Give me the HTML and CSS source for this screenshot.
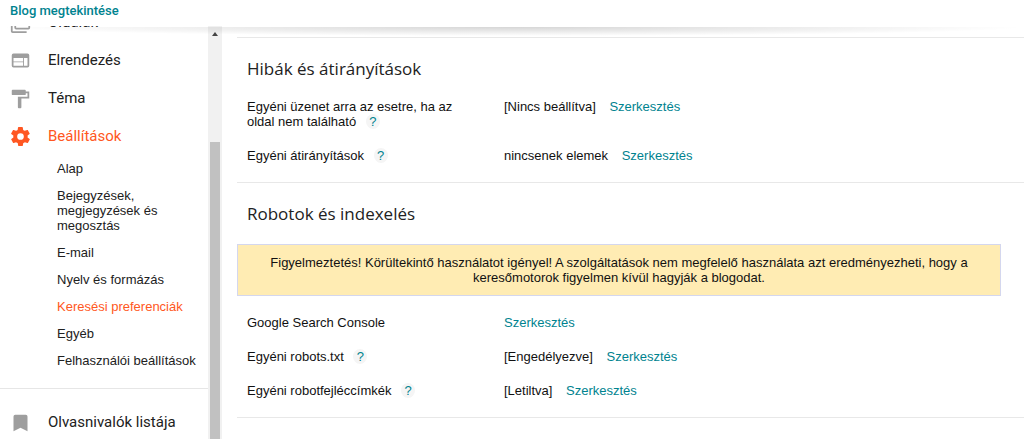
FILE: index.html
```html
<!DOCTYPE html>
<html lang="hu">
<head>
<meta charset="utf-8">
<title>Keresési preferenciák</title>
<link rel="stylesheet" href="styles.css">
</head>
<body>
<header class="topbar"><a class="view-blog" href="#">Blog megtekintése</a></header>
<div class="workspace">
  <div class="sidebar">
    <nav class="nav">
      <a class="nav-item" href="#"><svg class="icon" viewBox="0 0 24 24"><path d="M3 7H1v15a2 2 0 0 0 2 2h16v-2H3zM21 3H7a2 2 0 0 0-2 2v13a2 2 0 0 0 2 2h14a2 2 0 0 0 2-2V5a2 2 0 0 0-2-2zm0 15H7V5h14z"/></svg><span>Oldalak</span></a>
      <a class="nav-item" href="#"><svg class="icon" viewBox="0 0 24 24"><path d="M20 4H4a2 2 0 0 0-2 2v12a2 2 0 0 0 2 2h16a2 2 0 0 0 2-2V6a2 2 0 0 0-2-2zm-5 14H4v-4h11zm0-5H4V9h11zm5 5h-4V9h4z"/></svg><span>Elrendezés</span></a>
      <a class="nav-item" href="#"><svg class="icon" viewBox="0 0 24 24"><path d="M18 4V3a1 1 0 0 0-1-1H3a1 1 0 0 0-1 1v4a1 1 0 0 0 1 1h14a1 1 0 0 0 1-1V6h2v4H9v12a1 1 0 0 0 1 1h2a1 1 0 0 0 1-1V12h9V4z"/></svg><span>Téma</span></a>
      <a class="nav-item active" href="#"><svg class="icon" viewBox="1 1 22 22"><path d="M19.4 13c0-.3.1-.6.1-1s0-.7-.1-1l2.1-1.600c.2-.2.200-.4.100-.6l-2-3.500c-.1-.2-.4-.3-.6-.2l-2.500 1a7.300 7.300 0 0 0-1.700-1l-.4-2.600a.5.5 0 0 0-.5-.4h-4a.5.5 0 0 0-.5.400L9 5.100a7.700 7.700 0 0 0-1.700 1l-2.500-1c-.2-.1-.5 0-.6.200l-2 3.500c-.1.200-.1.500.1.600L4.500 11a8 8 0 0 0 0 2l-2.100 1.600c-.2.200-.2.400-.1.600l2 3.500c.1.200.4.300.6.200l2.500-1c.5.400 1.100.7 1.700 1l.4 2.600c0 .2.200.4.500.4h4c.2 0 .5-.2.500-.4l.4-2.600a7.300 7.300 0 0 0 1.700-1l2.500 1c.2.100.5 0 .6-.2l2-3.500c.1-.2.100-.5-.1-.6zM12 15.500a3.500 3.500 0 1 1 0-7 3.500 3.500 0 0 1 0 7z"/></svg><span>Beállítások</span></a>
      <ul class="subnav">
        <li><a href="#">Alap</a></li>
        <li><a href="#">Bejegyzések, megjegyzések és megosztás</a></li>
        <li><a href="#">E-mail</a></li>
        <li><a href="#">Nyelv és formázás</a></li>
        <li><a class="active" href="#">Keresési preferenciák</a></li>
        <li><a href="#">Egyéb</a></li>
        <li><a href="#">Felhasználói beállítások</a></li>
      </ul>
      <div class="nav-footer">
        <a class="nav-item" href="#"><svg class="icon" viewBox="0 0 24 24"><path d="M18 3H6a2 2 0 0 0-2 2v17l8-4 8 4V5a2 2 0 0 0-2-2z"/></svg><span>Olvasnivalók listája</span></a>
      </div>
    </nav>
    <div class="scrollbar"><svg class="scroll-arrow" viewBox="0 0 6 4"><path d="M0 4 3 0l3 4z"/></svg><div class="scroll-thumb"></div></div>
  </div>
  <main class="content">
    <section class="group">
      <h2>Hibák és átirányítások</h2>
      <dl>
        <div class="row"><dt>Egyéni üzenet arra az esetre, ha az oldal nem található <a class="help" href="#">?</a></dt><dd>[Nincs beállítva] <a class="edit" href="#">Szerkesztés</a></dd></div>
        <div class="row"><dt>Egyéni átirányítások <a class="help" href="#">?</a></dt><dd>nincsenek elemek <a class="edit" href="#">Szerkesztés</a></dd></div>
      </dl>
    </section>
    <section class="group">
      <h2>Robotok és indexelés</h2>
      <p class="warning">Figyelmeztetés! Körültekintő használatot igényel! A szolgáltatások nem megfelelő használata azt eredményezheti, hogy a keresőmotorok figyelmen kívül hagyják a blogodat.</p>
      <dl>
        <div class="row"><dt>Google Search Console</dt><dd><a href="#">Szerkesztés</a></dd></div>
        <div class="row"><dt>Egyéni robots.txt <a class="help" href="#">?</a></dt><dd>[Engedélyezve] <a class="edit" href="#">Szerkesztés</a></dd></div>
        <div class="row"><dt>Egyéni robotfejléccímkék <a class="help" href="#">?</a></dt><dd>[Letiltva] <a class="edit" href="#">Szerkesztés</a></dd></div>
      </dl>
    </section>
  </main>
  <div class="shadow"></div>
</div>
</body>
</html>
```
FILE: styles.css
```css
* { box-sizing: border-box; }
body {
  margin: 0;
  height: 100vh;
  display: flex;
  flex-direction: column;
  overflow: hidden;
  background: #fff;
  color: #111;
  font: 13px/15px "Liberation Sans", Arial, sans-serif;
}
a { color: #00838f; text-decoration: none; }
.topbar {
  flex: none;
  height: 26px;
  padding: 3px 10px;
}
.view-blog { font: 500 13px/15px Roboto, sans-serif; }
.workspace {
  position: relative;
  flex: 1;
  min-height: 0;
  display: flex;
  overflow: hidden;
}
.shadow {
  position: absolute;
  inset: 1px 0 auto;
  height: 9px;
  background: radial-gradient(ellipse 50% 100% at 50% 0, rgba(0, 0, 0, .16), rgba(0, 0, 0, 0));
}
.sidebar {
  flex: none;
  display: flex;
  width: 222px;
  overflow: hidden;
}
.nav { flex: 1; margin-top: -23px; }
.nav-item {
  display: flex;
  align-items: center;
  gap: 17px;
  height: 38px;
  padding-left: 10px;
  color: #212121;
  font: 15px/20px Roboto, sans-serif;
}
.icon { flex: none; width: 21px; height: 21px; fill: #9e9e9e; }
.active { color: #ff5722; }
.active .icon { fill: #ff5722; }
.subnav {
  display: flex;
  flex-direction: column;
  gap: 12px;
  margin: 0;
  padding: 6px 8px 20px 57px;
  list-style: none;
}
.subnav li { display: flex; }
.subnav a { color: #212121; }
.subnav .active { color: #ff5722; }
.nav-footer { padding-top: 14px; border-top: 1px solid #e6e6e6; }
.scrollbar {
  flex: none;
  display: flex;
  flex-direction: column;
  align-items: center;
  width: 14px;
  padding-top: 6px;
  background: #f1f1f1;
}
.scroll-arrow { width: 6px; height: 4px; fill: #444; }
.scroll-thumb { flex: 1; width: 10px; margin-top: 106px; background: #c1c1c1; }
.content { flex: 1; min-width: 0; padding: 11px 0 0 15px; }
.group { border-top: 1px solid #e8e8e8; }
.group:last-child { border-bottom: 1px solid #e8e8e8; }
h2 {
  margin: 0;
  padding: 19px 10px 18px;
  color: #222;
  font: 17px/24px "Open Sans", sans-serif;
}
dl {
  display: grid;
  gap: 19px;
  margin: 0;
  padding: 0 10px 19px;
}
.row { display: flex; }
dt { flex: none; width: 257px; padding-right: 40px; }
dd { margin: 0; }
.help {
  display: inline-block;
  width: 14px;
  margin-left: 6px;
  border-radius: 50%;
  background: #f5f5f5;
  text-align: center;
}
.edit { margin-left: 10px; }
.warning {
  margin: 0 23px 19px 0;
  padding: 10px 20px;
  border: 1px solid #d4d7ee;
  background: #ffecb3;
  text-align: center;
}
```
